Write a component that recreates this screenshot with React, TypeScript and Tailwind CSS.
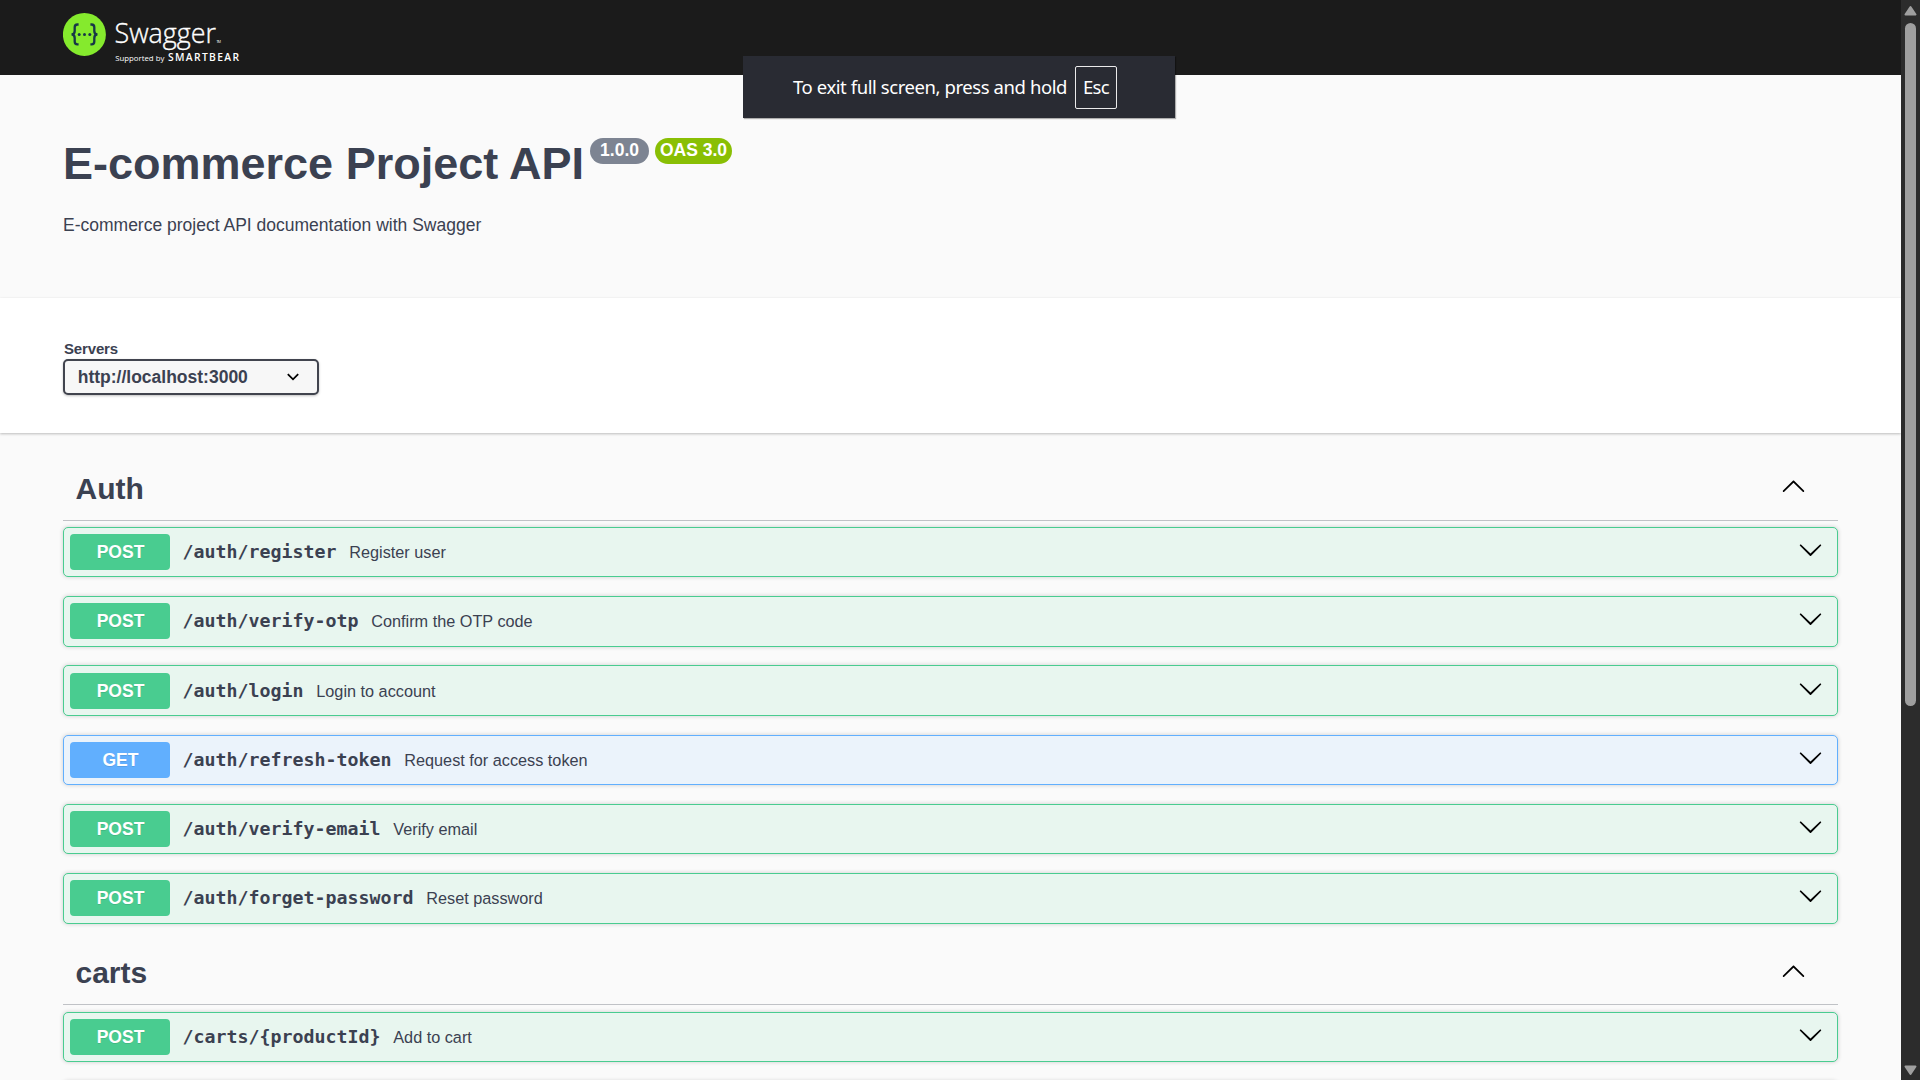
type Method = 'POST' | 'GET';

interface Operation {
  method: Method;
  path: string;
  summary: string;
}

const auth: Operation[] = [
  { method: 'POST', path: '/auth/register', summary: 'Register user' },
  { method: 'POST', path: '/auth/verify-otp', summary: 'Confirm the OTP code' },
  { method: 'POST', path: '/auth/login', summary: 'Login to account' },
  { method: 'GET', path: '/auth/refresh-token', summary: 'Request for access token' },
  { method: 'POST', path: '/auth/verify-email', summary: 'Verify email' },
  { method: 'POST', path: '/auth/forget-password', summary: 'Reset password' },
];

const carts: Operation[] = [{ method: 'POST', path: '/carts/{productId}', summary: 'Add to cart' }];

const blockStyle: Record<Method, string> = {
  POST: 'border-[#49cc90] bg-[#e8f6ef]',
  GET: 'border-[#61affe] bg-[#ebf3fb]',
};

const badgeStyle: Record<Method, string> = {
  POST: 'bg-[#49cc90]',
  GET: 'bg-[#61affe]',
};

function ArrowUp() {
  return (
    <svg viewBox="0 0 20 20" className="size-[25px]">
      <path d="M17.418 14.908c.272.268.709.268.979 0s.271-.701 0-.969l-7.908-7.83c-.27-.268-.707-.268-.979 0l-7.908 7.83c-.27.268-.27.701 0 .969.271.268.709.268.979 0L10 7.767l7.418 7.141z" />
    </svg>
  );
}

function ArrowDown() {
  return (
    <svg viewBox="0 0 20 20" className="size-[25px]">
      <path d="M17.418 6.109c.272-.268.709-.268.979 0s.271.701 0 .969l-7.908 7.83c-.27.268-.707.268-.979 0l-7.908-7.83c-.27-.268-.27-.701 0-.969.271-.268.709-.268.979 0L10 13.25l7.418-7.141z" />
    </svg>
  );
}

function Logo() {
  return (
    <svg width="220" height="75" viewBox="0 0 220 75" className="block">
      <circle cx="21.4" cy="34.4" r="21.5" fill="#85ea2d" />
      <g fill="none" stroke="#173647" strokeWidth="2.3">
        <path d="M15.6 24.5h-1.2c-2 0-2.7 1-2.7 2.8v3.6c0 2.2-.9 3.3-3.1 3.5 2.2.2 3.1 1.3 3.1 3.5v3.6c0 1.8.7 2.8 2.7 2.8h1.2" />
        <path d="M27.4 24.5h1.2c2 0 2.7 1 2.7 2.8v3.6c0 2.2.9 3.3 3.1 3.5-2.2.2-3.1 1.3-3.1 3.5v3.6c0 1.8-.7 2.8-2.7 2.8h-1.2" />
      </g>
      <g fill="#173647">
        <circle cx="16.2" cy="34.5" r="1.5" />
        <circle cx="21.5" cy="34.5" r="1.5" />
        <circle cx="26.8" cy="34.5" r="1.5" />
      </g>
      <g fill="#fff" fontFamily="'Open Sans', 'Noto Sans', sans-serif">
        <text x="51.5" y="43.3" fontSize="27.5" fontWeight="300" stroke="#fff" strokeWidth="0.35" textLength="101.5" lengthAdjust="spacingAndGlyphs">Swagger</text>
        <text x="153.5" y="43.3" fontSize="3.5" textLength="4.5">TM</text>
        <text x="52.3" y="60.8" fontSize="7.5" textLength="49" lengthAdjust="spacingAndGlyphs">Supported by</text>
        <text x="105" y="61" fontSize="10.3" fontWeight="600" textLength="71">SMARTBEAR</text>
      </g>
    </svg>
  );
}

function Section({ title, operations }: { title: string; operations: Operation[] }) {
  return (
    <section>
      <div className="mb-[6.25px] flex h-[63px] items-center border-b border-[#3b4151]/30 pr-[32px] pl-[12.5px]">
        <h3 className="flex-1 text-[30px] leading-[36px] font-bold">{title}</h3>
        <div className="-mt-[6px]">
          <ArrowUp />
        </div>
      </div>
      {operations.map((op) => (
        <div
          key={op.path}
          className={`mb-[18.75px] flex h-[50.5px] items-center rounded-[5px] border pr-[14.5px] pl-[6px] shadow-[0_0_4px_rgba(0,0,0,0.19)] ${blockStyle[op.method]}`}
        >
          <div
            className={`flex h-[36px] w-[100px] items-center justify-center rounded-[4px] pl-[1px] text-[17.5px] leading-[20px] font-bold text-white [text-shadow:0_1px_0_rgba(0,0,0,0.1)] ${badgeStyle[op.method]}`}
          >
            {op.method}
          </div>
          <div className="ml-[12.5px] font-['DejaVu_Sans_Mono','Liberation_Mono',monospace] text-[18.27px] leading-[24px] font-bold">
            {op.path}
          </div>
          <div className="ml-[12.8px] flex-1 text-[16.25px] leading-[20px]">{op.summary}</div>
          <div className="-mt-[5px]">
            <ArrowDown />
          </div>
        </div>
      ))}
    </section>
  );
}

function Scrollbar() {
  return (
    <div className="flex h-full w-[19px] flex-col items-center bg-[#2c2c2c]">
      <svg width="19" height="23" viewBox="0 0 19 23" className="shrink-0">
        <path d="M9.5 7 14.5 14.5h-10z" fill="#9f9f9f" stroke="#9f9f9f" strokeWidth="2" strokeLinejoin="round" />
      </svg>
      <div className="h-[683px] w-[11px] rounded-full bg-[#9f9f9f]" />
      <svg width="19" height="19" viewBox="0 0 19 19" className="mt-auto shrink-0">
        <path d="M9.5 13 14.5 5.5h-10z" fill="#9f9f9f" stroke="#9f9f9f" strokeWidth="2" strokeLinejoin="round" />
      </svg>
    </div>
  );
}

export default function App() {
  return (
    <div className="relative flex h-[1080px] w-[1920px] overflow-hidden bg-[#fafafa] font-['Liberation_Sans',Arial,sans-serif] text-[#3b4151]">
      <main className="flex min-w-0 flex-1 flex-col">
        <header className="h-[75px] shrink-0 bg-[#1b1b1b] pl-[63px]">
          <Logo />
        </header>

        <div className="h-[223px] shrink-0 px-[63px] pt-[63px]">
          <div className="flex items-start">
            <h2 className="text-[45px] leading-[52px] font-bold">E-commerce Project API</h2>
            <span className="ml-[6px] flex h-[26px] w-[59px] items-center justify-center rounded-full bg-[#7d8492] pb-[2px] text-[17.5px] font-bold text-white">
              1.0.0
            </span>
            <span className="ml-[6px] flex h-[26px] w-[77px] items-center justify-center rounded-full bg-[#89bf04] pb-[2px] text-[17.5px] font-bold text-white">
              OAS 3.0
            </span>
          </div>
          <p className="mt-[23px] text-[17.5px] leading-[24px]">E-commerce project API documentation with Swagger</p>
        </div>

        <div className="h-[135px] shrink-0 bg-white px-[63px] pt-[41px] shadow-[0_1px_2.5px_rgba(0,0,0,0.25)]">
          <div className="pl-[1px] text-[15px] leading-[20px] font-bold tracking-[-0.15px]">Servers</div>
          <div className="flex h-[36px] w-[256px] items-center justify-between rounded-[5px] border-2 border-[#41444e] bg-[#f7f7f7] pr-[18.5px] pl-[12.7px] text-[17.5px] font-bold shadow-[0_1px_2.5px_rgba(0,0,0,0.25)]">
            <span>http://localhost:3000</span>
            <svg width="12" height="8" viewBox="0 0 12 8" fill="none" stroke="#000" strokeWidth="1.8">
              <path d="M.8 1.2 6 6.3l5.200-5.100" />
            </svg>
          </div>
        </div>

        <div className="pt-[24.5px] pr-[63px] pl-[63px]">
          <Section title="Auth" operations={auth} />
          <Section title="carts" operations={carts} />
          <div className="h-[50.5px] rounded-[5px] border border-[#61affe] shadow-[0_0_4px_rgba(0,0,0,0.19)]" />
        </div>
      </main>

      <Scrollbar />

      <div className="absolute top-[56px] left-[743px] flex h-[62px] w-[432px] items-center bg-[#292b33] pl-[50px] font-['Noto_Sans','Open_Sans',sans-serif] text-[18.5px] text-white shadow-[1px_1px_1px_rgba(0,0,0,0.3)]">
        <span className="w-[282px] tracking-[-0.42px] whitespace-nowrap">To exit full screen, press and hold</span>
        <span className="flex h-[43px] w-[42px] items-center justify-center rounded-[2px] border-[1.5px] border-white/90 tracking-[-0.6px]">
          Esc
        </span>
      </div>
    </div>
  );
}
